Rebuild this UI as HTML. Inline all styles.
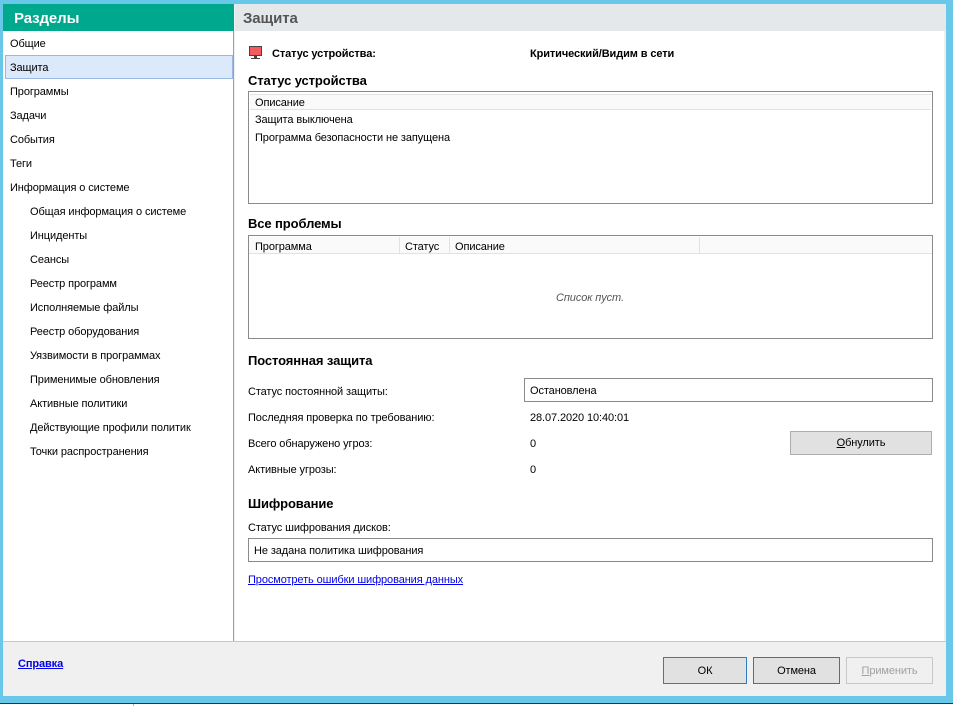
<!DOCTYPE html>
<html><head><meta charset="utf-8"><style>
*{margin:0;padding:0;box-sizing:border-box}
body{width:953px;height:706px;position:relative;overflow:hidden;background:#fff;font-family:"Liberation Sans","DejaVu Sans",sans-serif;font-size:11px;letter-spacing:-0.1px;color:#000}
.a{position:absolute}
.t{position:absolute;line-height:14px;white-space:nowrap;transform:translateY(1px)}
.b{font-weight:bold}
.h{font-weight:bold;font-size:13px;line-height:16px}
.box{position:absolute;border:1px solid #8a8a8a;background:#fff}
.btn{position:absolute;border:1px solid #adadad;background:#e1e1e1;text-align:center;line-height:24px}
</style></head><body>
<div class="a" style="left:0;top:0;width:953px;height:703px;background:#69c8ea"></div>
<div class="a" style="left:0;top:703px;width:953px;height:1px;background:#333"></div>
<div class="a" style="left:133px;top:704px;width:1px;height:2px;background:#aaa"></div>
<div class="a" style="left:3px;top:4px;width:943px;height:692px;background:#f0f0f0"></div>
<div class="a" style="left:3px;top:4px;width:231px;height:637px;background:#fff;border-right:1px solid #a0a0a0"></div>
<div class="a" style="left:3px;top:4px;width:231px;height:27px;background:#00a88e"></div>
<div class="t" style="left:14px;top:9px;color:#fff;font-weight:bold;font-size:15px;line-height:18px">Разделы</div>
<div class="a" style="left:5px;top:55px;width:228px;height:24px;background:#dce9fa;border:1px solid #99b8e4"></div>
<div class="t" style="left:10px;top:36px">Общие</div>
<div class="t" style="left:10px;top:60px">Защита</div>
<div class="t" style="left:10px;top:84px">Программы</div>
<div class="t" style="left:10px;top:108px">Задачи</div>
<div class="t" style="left:10px;top:132px">События</div>
<div class="t" style="left:10px;top:156px">Теги</div>
<div class="t" style="left:10px;top:180px">Информация о системе</div>
<div class="t" style="left:30px;top:204px">Общая информация о системе</div>
<div class="t" style="left:30px;top:228px">Инциденты</div>
<div class="t" style="left:30px;top:252px">Сеансы</div>
<div class="t" style="left:30px;top:276px">Реестр программ</div>
<div class="t" style="left:30px;top:300px">Исполняемые файлы</div>
<div class="t" style="left:30px;top:324px">Реестр оборудования</div>
<div class="t" style="left:30px;top:348px">Уязвимости в программах</div>
<div class="t" style="left:30px;top:372px">Применимые обновления</div>
<div class="t" style="left:30px;top:396px">Активные политики</div>
<div class="t" style="left:30px;top:420px">Действующие профили политик</div>
<div class="t" style="left:30px;top:444px">Точки распространения</div>
<div class="a" style="left:235px;top:4px;width:711px;height:27px;background:#e4e8eb"></div>
<div class="t" style="left:243px;top:9px;font-weight:bold;font-size:15px;line-height:18px;color:#555">Защита</div>
<div class="a" style="left:235px;top:31px;width:709px;height:610px;background:#fff"></div>
<div class="a" style="left:249px;top:46px;width:13px;height:10px;background:#f25c5c;border:1px solid #444"></div>
<div class="a" style="left:254px;top:56px;width:3px;height:2px;background:#444"></div>
<div class="a" style="left:251px;top:58px;width:9px;height:1px;background:#444"></div>
<div class="t b" style="left:272px;top:46px">Статус устройства:</div>
<div class="t b" style="left:530px;top:46px">Критический/Видим в сети</div>
<div class="t h" style="left:248px;top:72px">Статус устройства</div>
<div class="box" style="left:248px;top:91px;width:685px;height:113px"></div>
<div class="a" style="left:250px;top:94px;width:681px;height:16px;background:#fafafa;border-bottom:1px solid #e2e2e2;border-top:1px solid #e2e2e2"></div>
<div class="t" style="left:255px;top:95px">Описание</div>
<div class="t" style="left:255px;top:112px">Защита выключена</div>
<div class="t" style="left:255px;top:130px">Программа безопасности не запущена</div>
<div class="t h" style="left:248px;top:215px">Все проблемы</div>
<div class="box" style="left:248px;top:235px;width:685px;height:104px"></div>
<div class="a" style="left:249px;top:237px;width:683px;height:17px;background:#fafafa;border-bottom:1px solid #e2e2e2"></div>
<div class="a" style="left:399px;top:237px;width:1px;height:16px;background:#e2e2e2"></div>
<div class="a" style="left:449px;top:237px;width:1px;height:16px;background:#e2e2e2"></div>
<div class="a" style="left:699px;top:237px;width:1px;height:16px;background:#e2e2e2"></div>
<div class="t" style="left:255px;top:239px">Программа</div>
<div class="t" style="left:405px;top:239px">Статус</div>
<div class="t" style="left:455px;top:239px">Описание</div>
<div class="t" style="left:556px;top:290px;font-style:italic;color:#555">Список пуст.</div>
<div class="t h" style="left:248px;top:352px">Постоянная защита</div>
<div class="t" style="left:248px;top:384px">Статус постоянной защиты:</div>
<div class="box" style="left:524px;top:378px;width:409px;height:24px"></div>
<div class="t" style="left:530px;top:383px">Остановлена</div>
<div class="t" style="left:248px;top:410px">Последняя проверка по требованию:</div>
<div class="t" style="left:530px;top:410px">28.07.2020 10:40:01</div>
<div class="t" style="left:248px;top:436px">Всего обнаружено угроз:</div>
<div class="t" style="left:530px;top:436px">0</div>
<div class="btn" style="left:790px;top:431px;width:142px;height:24px;line-height:23px"><u>О</u>бнулить</div>
<div class="t" style="left:248px;top:462px">Активные угрозы:</div>
<div class="t" style="left:530px;top:462px">0</div>
<div class="t h" style="left:248px;top:495px">Шифрование</div>
<div class="t" style="left:248px;top:520px">Статус шифрования дисков:</div>
<div class="box" style="left:248px;top:538px;width:685px;height:24px"></div>
<div class="t" style="left:254px;top:543px">Не задана политика шифрования</div>
<div class="t" style="left:248px;top:572px;color:#0000ee;text-decoration:underline">Просмотреть ошибки шифрования данных</div>
<div class="a" style="left:3px;top:641px;width:943px;height:1px;background:#c8c8c8"></div>
<div class="t b" style="left:18px;top:656px;color:#0000ee;text-decoration:underline">Справка</div>
<div class="btn" style="left:663px;top:657px;width:84px;height:27px;border-color:#2f7cc4;line-height:26px">ОК</div>
<div class="btn" style="left:753px;top:657px;width:87px;height:27px;border-color:#6a6a6a;line-height:26px">Отмена</div>
<div class="btn" style="left:846px;top:657px;width:87px;height:27px;border-color:#c8c8c8;background:#f0f0f0;color:#a0a0a0;line-height:26px"><u>П</u>рименить</div>
</body></html>
